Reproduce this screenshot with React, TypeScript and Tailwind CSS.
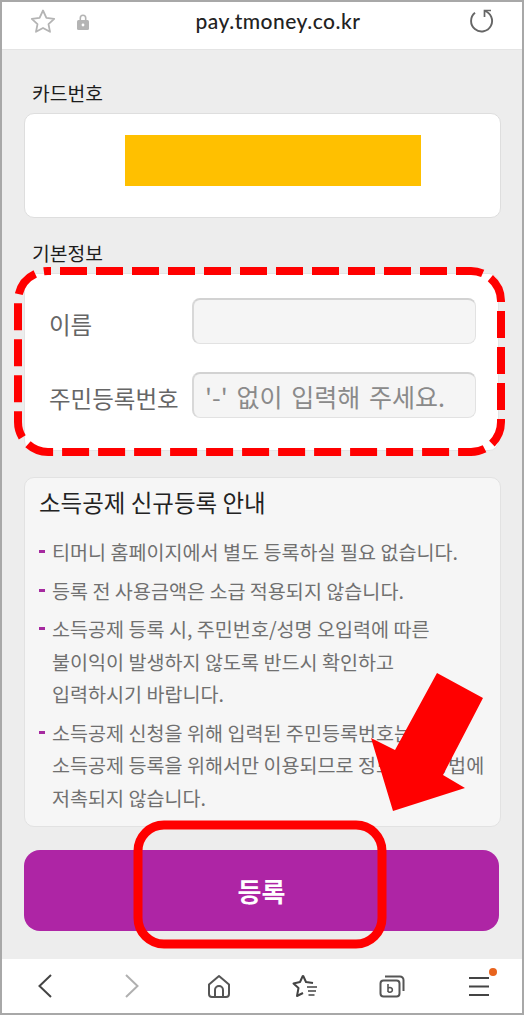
const font = { fontFamily: '"Noto Sans CJK KR", "Noto Sans", sans-serif' };

function Bullet({ lines }: { lines: string[] }) {
  return (
    <div className="flex">
      <div className="w-[14px] shrink-0 pt-[14px] pl-[0px]">
        <div className="w-[6px] h-[3px] bg-[#a62aa0]" />
      </div>
      <div className="-ml-[1px]">
        {lines.map((l) => (
          <div key={l} className="h-[32.5px] leading-[32.5px] text-[19.6px] text-[#707070] whitespace-nowrap">
            {l}
          </div>
        ))}
      </div>
    </div>
  );
}

export default function App() {
  return (
    <div style={font} className="relative w-[524px] h-[1015px] overflow-hidden bg-[#ededed] border-2 border-[#a8a8a8] flex flex-col">
      <header className="relative h-[48px] shrink-0 bg-white border-b border-[#e4e4e4] flex items-center justify-center">
        <svg className="absolute left-[28px] top-[7px]" width="26" height="26" viewBox="0 0 26 26" fill="none" stroke="#b4b4b4" strokeWidth="1.8" strokeLinejoin="round">
          <path d="M13 1.500l3.400 7.300 7.800 1-5.700 5.300 1.500 7.700-7-3.800-7 3.800 1.500-7.700-5.700-5.300 7.800-1z" />
        </svg>
        <svg className="absolute left-[74px] top-[11px]" width="14" height="18" viewBox="0 0 14 18" fill="#b4b4b4">
          <path d="M3.500 7V5a3.500 3.500 0 0 1 7 0v2H8.900V5a1.900 1.900 0 0 0-3.800 0v2z" />
          <rect x="1" y="7" width="12" height="10" rx="1.500" />
          <circle cx="7" cy="12" r="1.400" fill="#fff" />
        </svg>
        <span style={{ fontFamily: '"Lato", sans-serif' }} className="text-[21px] font-medium tracking-[0.5px] text-[#222] -mt-[9px] ml-[32px]">pay.tmoney.co.kr</span>
        <svg className="absolute left-[466px] top-[7px]" width="26" height="26" viewBox="0 0 26 26" fill="none" stroke="#666" strokeWidth="1.900">
          <path d="M7 3.800A10.500 10.500 0 1 0 16.500 1.900" />
          <path d="M23 1.500H16.500V8" strokeWidth="1.700" />
        </svg>
      </header>

      <main className="flex-1 px-[22px] flex flex-col">
        <h2 className="mt-[30px] ml-[8px] h-[26px] leading-[26px] text-[19.3px] text-[#1c1c1c]">카드번호</h2>
        <section className="mt-[7px] w-[477px] h-[105px] rounded-[10px] bg-white border border-[#dedede] pl-[100px] pt-[21px]">
          <div className="w-[296px] h-[51px] bg-[#ffc000]" />
        </section>

        <h2 className="mt-[22px] ml-[8px] h-[26px] leading-[26px] text-[19.3px] text-[#1c1c1c]">기본정보</h2>
        <section className="mt-[7px] w-[475px] h-[178px] rounded-[10px] bg-white border border-[#e4e4e4] pl-[24px] pt-[24px] flex flex-col gap-[28px]">
          <div className="flex items-center h-[46px]">
            <span className="w-[143px] text-[23.5px] text-[#666] pt-[7px]">이름</span>
            <div className="w-[284px] h-[46px] rounded-[8px] bg-[#f5f5f5] border border-[#e2e2e2] border-t-2 border-l-2 border-t-[#d2d2d2] border-l-[#d8d8d8]" />
          </div>
          <div className="flex items-center h-[46px]">
            <span className="w-[143px] text-[23.5px] text-[#666] whitespace-nowrap pt-[7px]">주민등록번호</span>
            <div className="w-[284px] h-[46px] rounded-[8px] bg-[#f5f5f5] border border-[#e2e2e2] border-t-2 border-l-2 border-t-[#d2d2d2] border-l-[#d8d8d8] pl-[11px] pt-[2px] flex items-center text-[25px] [word-spacing:3.2px] text-[#8a8a8a] whitespace-nowrap">
              '-' 없이 입력해 주세요.
            </div>
          </div>
        </section>

        <section className="mt-[26px] w-[477px] h-[350px] rounded-[10px] bg-[#f6f6f6] border border-[#e2e2e2] pl-[14px] pt-[7px]">
          <h3 className="h-[34px] leading-[34px] text-[23.5px] text-[#222] whitespace-nowrap">소득공제 신규등록 안내</h3>
          <div className="mt-[17px] flex flex-col gap-[6px]">
            <Bullet lines={["티머니 홈페이지에서 별도 등록하실 필요 없습니다."]} />
            <Bullet lines={["등록 전 사용금액은 소급 적용되지 않습니다."]} />
            <Bullet lines={["소득공제 등록 시, 주민번호/성명 오입력에 따른", "불이익이 발생하지 않도록 반드시 확인하고", "입력하시기 바랍니다."]} />
            <Bullet lines={["소득공제 신청을 위해 입력된 주민등록번호는", "소득공제 등록을 위해서만 이용되므로 정보통신망법에", "저촉되지 않습니다."]} />
          </div>
        </section>

        <button className="mt-[23px] w-[475px] h-[81px] rounded-[16px] bg-[#ae25a5] text-white text-[26px] font-bold">등록</button>
      </main>

      <nav className="h-[54px] shrink-0 bg-white relative grid grid-cols-6">
        <div className="flex items-center justify-center">
          <svg width="18" height="26" viewBox="0 0 18 26" fill="none" stroke="#444" strokeWidth="2"><path d="M15 2 3.500 13 15 24" /></svg>
        </div>
        <div className="flex items-center justify-center">
          <svg width="18" height="26" viewBox="0 0 18 26" fill="none" stroke="#b0b0b0" strokeWidth="2"><path d="M3 2 14.500 13 3 24" /></svg>
        </div>
        <div className="flex items-center justify-center">
          <svg width="24" height="24" viewBox="0 0 24 24" fill="none" stroke="#555" strokeWidth="2" strokeLinejoin="round"><path d="M2 10.500 12 2l10 8.500V20a3 3 0 0 1-3 3H5a3 3 0 0 1-3-3z" /><path d="M8 23v-7a4 4 0 0 1 8 0v7" /></svg>
        </div>
        <div className="flex items-center justify-center">
          <svg width="26" height="24" viewBox="0 0 26 24" fill="none" stroke="#444" strokeWidth="2" strokeLinejoin="round"><path d="M11 1.500 8 8 1.500 9.500l5 4.500-1.500 8 6-3" /><path d="M11 1.500l3 6.500 7 1" /><path d="M15 13h10M16 17h8M16.500 21h6" strokeWidth="1.700" /></svg>
        </div>
        <div className="flex items-center justify-center">
          <svg width="26" height="24" viewBox="0 0 26 24" fill="none" stroke="#555" strokeWidth="2"><rect x="1.500" y="6.500" width="19" height="16" rx="3" /><path d="M6 2.500h15a3.500 3.500 0 0 1 3.500 3.500V17" /><path d="M9 10v8M9 14.500a2.400 2.400 0 1 1 0 2.800" strokeWidth="1.600" /></svg>
        </div>
        <div className="flex items-center justify-center">
          <svg width="22" height="20" viewBox="0 0 22 20" stroke="#444" strokeWidth="2"><path d="M1 2h20M1 10.500h20M1 19h20" /></svg>
        </div>
        <div className="absolute left-[487px] top-[9px] w-[8px] h-[8px] rounded-full bg-[#e8641e]" />
      </nav>

      <svg className="absolute left-[-2px] top-[-2px] pointer-events-none" width="524" height="1015" viewBox="0 0 524 1015" fill="none">
        <rect x="18" y="271" width="483" height="181" rx="30" stroke="#ff0000" strokeWidth="8" strokeDasharray="27 9" strokeDashoffset="-12" />
        <rect x="138" y="825" width="244" height="119" rx="26" stroke="#ff0000" strokeWidth="9" />
        <polygon points="393,811 371,738 395,750 437,673 483,698 443,775 465,788" fill="#ff0000" />
      </svg>
    </div>
  );
}
